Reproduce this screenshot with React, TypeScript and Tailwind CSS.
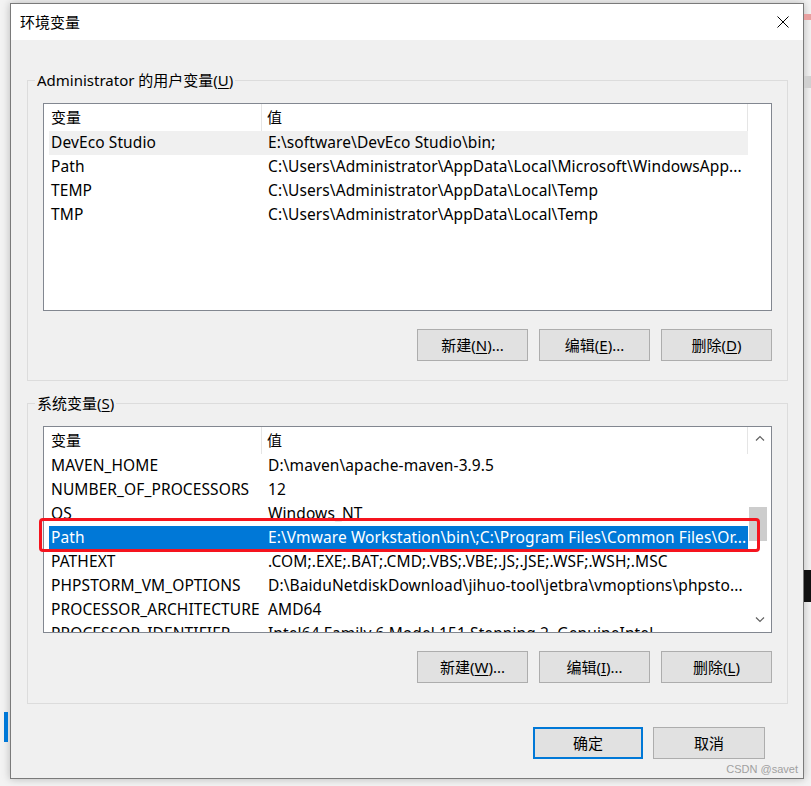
import React from 'react'

const FONT = "font-['Noto_Sans','Noto_Sans_CJK_SC',sans-serif]"

type Row = { name: string; value: string }

const USER_ROWS: Row[] = [
  { name: 'DevEco Studio', value: 'E:\\software\\DevEco Studio\\bin;' },
  { name: 'Path', value: 'C:\\Users\\Administrator\\AppData\\Local\\Microsoft\\WindowsApp...' },
  { name: 'TEMP', value: 'C:\\Users\\Administrator\\AppData\\Local\\Temp' },
  { name: 'TMP', value: 'C:\\Users\\Administrator\\AppData\\Local\\Temp' },
]

const SYSTEM_ROWS: Row[] = [
  { name: 'MAVEN_HOME', value: 'D:\\maven\\apache-maven-3.9.5' },
  { name: 'NUMBER_OF_PROCESSORS', value: '12' },
  { name: 'OS', value: 'Windows_NT' },
  { name: 'Path', value: 'E:\\Vmware Workstation\\bin\\;C:\\Program Files\\Common Files\\Or...' },
  { name: 'PATHEXT', value: '.COM;.EXE;.BAT;.CMD;.VBS;.VBE;.JS;.JSE;.WSF;.WSH;.MSC' },
  { name: 'PHPSTORM_VM_OPTIONS', value: 'D:\\BaiduNetdiskDownload\\jihuo-tool\\jetbra\\vmoptions\\phpsto...' },
  { name: 'PROCESSOR_ARCHITECTURE', value: 'AMD64' },
  { name: 'PROCESSOR_IDENTIFIER', value: 'Intel64 Family 6 Model 151 Stepping 2, GenuineIntel' },
]

function Chevron({ up }: { up?: boolean }) {
  return (
    <svg width="10" height="6" viewBox="0 0 10 6" fill="none" stroke="#606060" strokeWidth="1.2">
      {up ? <path d="M1 5.5 5 1.5 9 5.5" /> : <path d="M1 0.5 5 4.5 9 0.5" />}
    </svg>
  )
}

function VarList({ rows, height, selected, scroll }: { rows: Row[]; height: string; selected?: number; scroll?: boolean }) {
  return (
    <div className={`relative flex border border-[#828790] bg-white overflow-hidden ${height}`}>
      <div className="w-[704px] flex-shrink-0">
        {/* header */}
        <div className="flex h-[27px] items-center text-[15px] text-black">
          <div className="w-[218px] h-full pl-[7px] flex items-center border-r border-[#e5e5e5]">变量</div>
          <div className="flex-1 h-full pl-[5px] flex items-center border-r border-[#e5e5e5]">值</div>
        </div>
        <div className="pl-[5px]">
          {rows.map((r, i) => {
            const isSel = i === selected
            const bg = isSel ? 'bg-[#0078d7] text-white' : i === 0 && !scroll ? 'bg-[#f0f0f0] text-black' : 'text-black'
            return (
              <div
                key={r.name + i}
                className={`flex h-[24px] items-center text-[15.5px] tracking-[0.1px] whitespace-nowrap ${bg}`}
              >
                <div className="w-[213px] pl-[2px] overflow-hidden">{r.name}</div>
                <div className="flex-1 pl-[6px] overflow-hidden">{r.value}</div>
              </div>
            )
          })}
        </div>
      </div>
      {scroll && (
        <div className="flex-1 flex flex-col bg-white">
          <div className="h-[20px] flex items-center justify-center pt-[2px]">
            <Chevron up />
          </div>
          <div className="flex-1 pt-[60px]">
            <div className="ml-[1px] w-[18px] h-[34px] bg-[#cdcdcd]" />
          </div>
          <div className="h-[22px] flex items-center justify-center pb-[2px]">
            <Chevron />
          </div>
        </div>
      )}
    </div>
  )
}

function WinButton({ label, mn, suffix, w = 'w-[111px]', focused }: { label: string; mn?: string; suffix?: string; w?: string; focused?: boolean }) {
  return (
    <button
      className={`${w} h-[32px] flex items-center justify-center text-[15px] text-black bg-[#e1e1e1] ${
        focused ? 'border-2 border-[#0078d7]' : 'border border-[#adadad]'
      }`}
    >
      {label}
      {mn && (
        <>
          (<span className="underline underline-offset-2">{mn}</span>)
        </>
      )}
      {suffix}
    </button>
  )
}

function Group({ legend, mn, children, className }: { legend: string; mn: string; children: React.ReactNode; className?: string }) {
  return (
    <fieldset className={`ml-[16px] w-[761px] border border-[#dcdcdc] ${className ?? ''}`}>
      <legend className="ml-[7px] px-[2px] text-[15px] leading-[20px] text-black">
        {legend}(<span className="underline underline-offset-2">{mn}</span>)
      </legend>
      {children}
    </fieldset>
  )
}

export default function App() {
  return (
    <div className={`relative w-[811px] h-[786px] bg-[#f3f3f3] overflow-hidden ${FONT}`}>
      {/* bits of the desktop behind the dialog */}
      <div className="absolute left-[4px] top-[712px] w-[4px] h-[30px] bg-[#0078d7]" />
      <div className="absolute left-[804px] top-[14px] w-[7px] h-[6px] bg-[#e8a0a0]" />
      <div className="absolute left-[804px] top-[76px] w-[7px] h-[12px] bg-[#d0d0d0]" />
      <div className="absolute left-[804px] top-[570px] w-[7px] h-[32px] bg-[#111111]" />

      <div className="pt-[3px] pl-[10px]">
        <div className="w-[794px] h-[776px] border border-[#7a7a7a] bg-[#f0f0f0] flex flex-col shadow-[0_0_8px_rgba(0,0,0,0.25)]">
          {/* title bar */}
          <div className="h-[36px] bg-white flex items-center justify-between pl-[9px] pr-[14px]">
            <span className="text-[15px] text-black">环境变量</span>
            <svg width="12" height="12" viewBox="0 0 12 12" stroke="#000" strokeWidth="1">
              <path d="M0.5 0.5 11.5 11.5M11.5 0.5 0.5 11.5" />
            </svg>
          </div>

          {/* user variables */}
          <Group legend="Administrator 的用户变量" mn="U" className="mt-[30px]">
            <div className="pt-[13px] pl-[15px] pb-[19px]">
              <VarList rows={USER_ROWS} height="h-[208px] w-[729px]" />
              <div className="mt-[18px] w-[729px] flex justify-end gap-[11px]">
                <WinButton label="新建" mn="N" suffix="..." />
                <WinButton label="编辑" mn="E" suffix="..." />
                <WinButton label="删除" mn="D" />
              </div>
            </div>
          </Group>

          {/* system variables */}
          <Group legend="系统变量" mn="S" className="mt-[12px]">
            <div className="pt-[13px] pl-[15px] pb-[20px]">
              <div className="relative">
                <VarList rows={SYSTEM_ROWS} height="h-[207px] w-[729px]" selected={3} scroll />
                <div className="absolute left-[-4px] top-[92px] w-[721px] h-[34px] border-[3px] border-[#f5141e] rounded-[4px]" />
              </div>
              <div className="mt-[18px] w-[729px] flex justify-end gap-[11px]">
                <WinButton label="新建" mn="W" suffix="..." />
                <WinButton label="编辑" mn="I" suffix="..." />
                <WinButton label="删除" mn="L" />
              </div>
            </div>
          </Group>

          <div className="mt-[23px] flex justify-end gap-[10px] pr-[38px]">
            <WinButton label="确定" w="w-[110px]" focused />
            <WinButton label="取消" w="w-[112px]" />
          </div>

          <div className="mt-auto flex justify-end pr-[5px] pb-[2px]">
            <span className="text-[11px] leading-[13px] text-[#a0a0a0] font-['Liberation_Sans',sans-serif]">CSDN @savet</span>
          </div>
        </div>
      </div>
    </div>
  )
}
